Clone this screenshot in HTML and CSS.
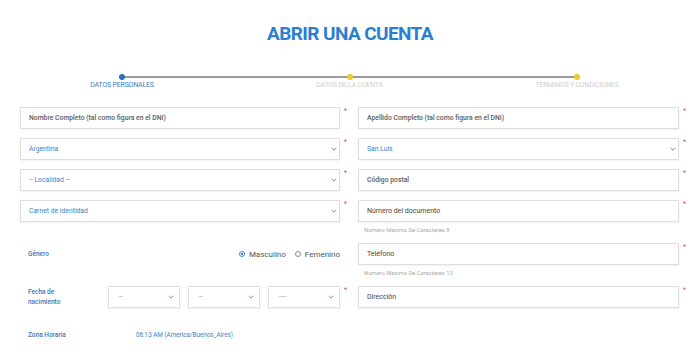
FILE: index.html
```html
<!DOCTYPE html>
<html lang="es">
<head>
  <meta charset="UTF-8">
  <title>Abrir una cuenta</title>
  <link rel="stylesheet" href="styles.css">
</head>
<body>

  <h1 class="titulo">ABRIR UNA CUENTA</h1>

  <div class="pasos">
    <div class="paso activo"><span class="punto"></span><span class="nombre">DATOS PERSONALES</span></div>
    <div class="paso"><span class="punto"></span><span class="nombre">DATOS DE LA CUENTA</span></div>
    <div class="paso"><span class="punto"></span><span class="nombre">TERMINOS Y CONDICIONES</span></div>
  </div>

  <div class="formulario">
    <div class="campo">
      <div class="control">Nombre Completo (tal como figura en el DNI)</div>
      <span class="req">*</span>
    </div>
    <div class="campo">
      <div class="control">Apellido Completo (tal como figura en el DNI)</div>
      <span class="req">*</span>
    </div>

    <div class="campo">
      <div class="control select">Argentina <svg class="flecha" viewBox="0 0 10 6"><path d="M1 1l4 4 4-4"/></svg></div>
      <span class="req">*</span>
    </div>
    <div class="campo">
      <div class="control select">San Luis <svg class="flecha" viewBox="0 0 10 6"><path d="M1 1l4 4 4-4"/></svg></div>
      <span class="req">*</span>
    </div>

    <div class="campo">
      <div class="control select">-- Localidad -- <svg class="flecha" viewBox="0 0 10 6"><path d="M1 1l4 4 4-4"/></svg></div>
      <span class="req">*</span>
    </div>
    <div class="campo">
      <div class="control">Código postal</div>
      <span class="req">*</span>
    </div>

    <div class="campo">
      <div class="control select">Carnet de identidad <svg class="flecha" viewBox="0 0 10 6"><path d="M1 1l4 4 4-4"/></svg></div>
      <span class="req">*</span>
    </div>
    <div class="campo">
      <div class="caja">
        <div class="control oscuro">Número del documento</div>
        <p class="ayuda">Numero Maximo De Caracteres 8</p>
      </div>
      <span class="req">*</span>
    </div>

    <div class="campo">
      <div class="fila-label">
        <span class="etiqueta">Género</span>
        <div class="radios">
          <label class="radio"><span class="circulo marcado"></span>Masculino</label>
          <label class="radio"><span class="circulo"></span>Femenino</label>
        </div>
      </div>
      <span class="req vacio"></span>
    </div>
    <div class="campo">
      <div class="caja">
        <div class="control oscuro">Teléfono</div>
        <p class="ayuda">Numero Maximo De Caracteres 13</p>
      </div>
      <span class="req">*</span>
    </div>

    <div class="campo">
      <div class="fila-label">
        <span class="etiqueta">Fecha de<br>nacimiento</span>
        <div class="fechas">
          <div class="control select chico">-- <svg class="flecha" viewBox="0 0 10 6"><path d="M1 1l4 4 4-4"/></svg></div>
          <div class="control select chico">-- <svg class="flecha" viewBox="0 0 10 6"><path d="M1 1l4 4 4-4"/></svg></div>
          <div class="control select chico">---- <svg class="flecha" viewBox="0 0 10 6"><path d="M1 1l4 4 4-4"/></svg></div>
        </div>
      </div>
      <span class="req">*</span>
    </div>
    <div class="campo">
      <div class="control oscuro">Dirección</div>
      <span class="req">*</span>
    </div>

    <div class="campo zona">
      <span class="etiqueta ancho">Zona Horaria</span>
      <span class="hora">06:13 AM (America/Buenos_Aires)</span>
    </div>
  </div>

</body>
</html>
```

FILE: styles.css
```css
body {
  font-family: Roboto, "Liberation Sans", sans-serif;
  background-color: #fff;
  margin: 0;
  padding: 0;
}
.titulo {
  margin: 0;
  padding-top: 21px;
  text-align: center;
  font-size: 19px;
  line-height: 26px;
  font-weight: 700;
  letter-spacing: -0.6px;
  color: #2b7fd1;
}
.pasos {
  position: relative;
  margin: 27px 0 0 122px;
  width: 455px;
  height: 33px;
  display: flex;
  justify-content: space-between;
}
.pasos::before {
  content: "";
  position: absolute;
  left: 0;
  right: 0;
  top: 2px;
  height: 2px;
  background: #9a9a9a;
}
.paso {
  width: 0;
  display: flex;
  flex-direction: column;
  align-items: center;
}
.punto {
  position: relative;
  width: 6px;
  height: 6px;
  flex: none;
  border-radius: 50%;
  background: #f1c52e;
}
.paso.activo .punto {
  background: #2a6fb8;
}
.nombre {
  white-space: nowrap;
  margin-top: 1px;
  font-size: 7px;
  letter-spacing: -0.2px;
  color: #cfcfcf;
}
.paso.activo .nombre {
  color: #3c7cc0;
}
.formulario {
  display: grid;
  grid-template-columns: 338px 342px;
  row-gap: 9px;
  margin-left: 20px;
}
.campo {
  display: flex;
  align-items: flex-start;
}
.caja, .fila-label {
  flex: 1;
}
.campo > .control {
  flex: 1;
}
.control {
  box-sizing: border-box;
  height: 22px;
  display: flex;
  align-items: center;
  padding: 0 8px;
  border: 1px solid #dedede;
  box-shadow: 0 1px 2px rgba(0,0,0,0.06);
  font-size: 6.8px;
  font-weight: 500;
  color: #5c5c5c;
}
.control.oscuro {
  font-weight: 400;
  font-size: 7px;
  color: #444;
}
.control.select {
  justify-content: space-between;
  color: #3d80c4;
  font-weight: 400;
  padding-right: 2px;
}
.flecha {
  width: 6px;
  height: 4px;
  fill: none;
  stroke: #5b8cc0;
  stroke-width: 1.6;
}
.req {
  width: 18px;
  flex: none;
  padding: 0 0 0 4px;
  box-sizing: border-box;
  font-size: 7px;
  line-height: 8px;
  color: #e0445a;
}
.campo:nth-child(even) .req {
  width: 21px;
}
.ayuda {
  margin: 4px 0 0 6px;
  font-size: 5.8px;
  line-height: 8px;
  color: #a9a9a9;
}
.fila-label {
  display: flex;
  align-items: center;
  height: 22px;
  padding-left: 8px;
}
.etiqueta {
  font-size: 6.5px;
  line-height: 10px;
  font-weight: 500;
  color: #3a76b8;
  width: 80px;
  flex: none;
}
.radios {
  margin-left: auto;
  display: flex;
  gap: 9px;
}
.radio {
  display: flex;
  align-items: center;
  gap: 4px;
  font-size: 8px;
  color: #555;
}
.circulo {
  box-sizing: border-box;
  width: 6px;
  height: 6px;
  border-radius: 50%;
  border: 1px solid #888;
}
.circulo.marcado {
  border-color: #3a84d0;
  background: radial-gradient(circle, #3a84d0 45%, #fff 50%);
}
.fechas {
  flex: 1;
  display: flex;
  gap: 8px;
}
.control.chico {
  flex: 1;
  color: #999;
  padding: 0 5px 0 10px;
}
.zona {
  grid-column: 1 / 3;
  padding: 13px 0 0 8px;
  align-items: center;
}
.etiqueta.ancho {
  width: 108px;
}
.hora {
  font-size: 6.3px;
  color: #3d80c4;
}
```
